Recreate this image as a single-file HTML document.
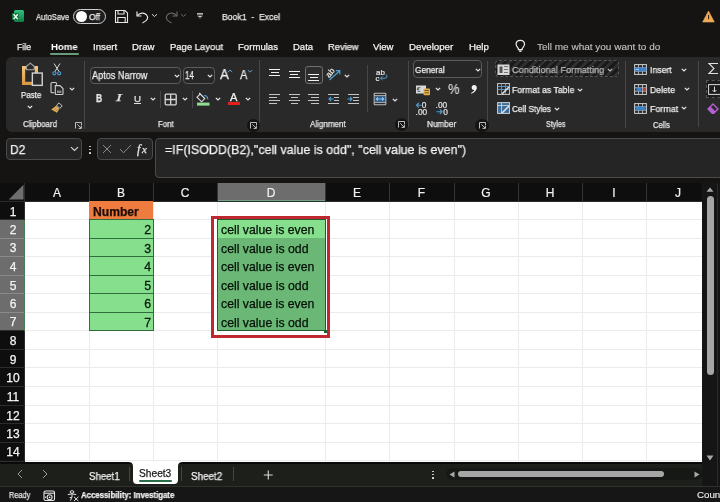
<!DOCTYPE html>
<html><head><meta charset="utf-8"><style>
.t{will-change:transform;}
html,body{margin:0;padding:0;width:720px;height:502px;overflow:hidden;background:#151412;font-family:"Liberation Sans", sans-serif;}
</style></head><body>
<div style="position:relative;width:720px;height:502px;overflow:hidden;">
<div style="position:absolute;left:14px;top:10px;width:10px;height:12px;background:linear-gradient(#33c481,#21a366 45%,#107c41);border-radius:1.5px;"></div>
<div style="position:absolute;left:11.8px;top:12.6px;width:7.4px;height:7.4px;background:#107c41;border-radius:1px;"></div>
<svg style="position:absolute;left:11.8px;top:12.6px;" width="7.4" height="7.4" viewBox="0 0 7.4 7.4"><path d="M1.6 1.3 L5.8 6.1 M5.8 1.3 L1.6 6.1" stroke="#fff" stroke-width="1.3"/></svg>
<div class="t" style="position:absolute;left:35.5px;top:12.80px;font-size:8.8px;line-height:8.8px;font-weight:400;color:#e8e8e8;white-space:pre;-webkit-text-stroke:0.25px #e8e8e8;transform:scaleX(0.8701);transform-origin:0 0;">AutoSave</div>
<div style="position:absolute;left:73px;top:9px;width:33px;height:15px;box-sizing:border-box;border:1.3px solid #cfcfcf;border-radius:8px;background:#1e1e1e;"></div>
<div style="position:absolute;left:75.5px;top:11px;width:11px;height:11px;background:#fff;border-radius:50%;"></div>
<div class="t" style="position:absolute;left:89.4px;top:12.63px;font-size:9px;line-height:9px;font-weight:400;color:#f0f0f0;white-space:pre;-webkit-text-stroke:0.25px #f0f0f0;transform:scaleX(0.9456);transform-origin:0 0;">Off</div>
<svg style="position:absolute;left:114px;top:9px;" width="15" height="15" viewBox="0 0 15 15"><path d="M1.5 1.5 H11 L13.5 4 V13.5 H1.5 Z" fill="none" stroke="#e6e6e6" stroke-width="1.1"/><path d="M4 1.5 V5 H10 V1.5" fill="none" stroke="#e6e6e6" stroke-width="1.1"/><path d="M3.8 13.5 V8.5 H11.2 V13.5" fill="none" stroke="#e6e6e6" stroke-width="1.1"/></svg>
<svg style="position:absolute;left:135px;top:9px;" width="15" height="15" viewBox="0 0 15 15"><path d="M2 2.5 V7 H6.5" fill="none" stroke="#e6e6e6" stroke-width="1.2"/><path d="M2.3 6.8 C4.5 3.8 9 3 11.5 5.8 C14 8.6 12.5 11.5 7.5 14" fill="none" stroke="#e6e6e6" stroke-width="1.2"/></svg>
<svg style="position:absolute;left:151px;top:13px;" width="7" height="5" viewBox="0 0 7 5"><path d="M1 1.2 L3.5 3.5 L6 1.2" fill="none" stroke="#d8d8d8" stroke-width="1"/></svg>
<svg style="position:absolute;left:164px;top:9px;" width="15" height="15" viewBox="0 0 15 15"><path d="M13 2.5 V7 H8.5" fill="none" stroke="#6a6a6a" stroke-width="1.1"/><path d="M12.7 6.8 C10.5 3.8 6 3 3.5 5.8 C1 8.6 2.5 11.5 7.5 14" fill="none" stroke="#6a6a6a" stroke-width="1.1"/></svg>
<svg style="position:absolute;left:180px;top:13px;" width="7" height="5" viewBox="0 0 7 5"><path d="M1 1.2 L3.5 3.5 L6 1.2" fill="none" stroke="#6a6a6a" stroke-width="1"/></svg>
<svg style="position:absolute;left:196px;top:12px;" width="8" height="8" viewBox="0 0 8 8"><rect x="1" y="1.2" width="6" height="1.3" fill="#e0e0e0"/><path d="M1.2 3.8 H6.8 L4 6.8 Z" fill="#e0e0e0"/><path d="M2.3 4.5 L4 6 L5.7 4.5" fill="none" stroke="#151412" stroke-width="0.8"/></svg>
<div class="t" style="position:absolute;left:221.9px;top:12.21px;font-size:9.5px;line-height:9.5px;font-weight:400;color:#ececec;white-space:pre;-webkit-text-stroke:0.25px #ececec;transform:scaleX(0.9094);transform-origin:0 0;">Book1  -  Excel</div>
<svg style="position:absolute;left:702px;top:10px;" width="13" height="13" viewBox="0 0 13 13"><path d="M6.5 1 L12.3 12 H0.7 Z" fill="#f0a957" stroke="#f0a957" stroke-width="0.6" stroke-linejoin="round"/><rect x="6" y="4.8" width="1.1" height="4.4" fill="#3a2a10"/></svg>
<div class="t" style="position:absolute;left:16.7px;top:42.21px;font-size:9.5px;line-height:9.5px;font-weight:400;color:#f2f2f2;white-space:pre;-webkit-text-stroke:0.25px #f2f2f2;transform:scaleX(0.9208);transform-origin:0 0;">File</div>
<div class="t" style="position:absolute;left:92.5px;top:42.21px;font-size:9.5px;line-height:9.5px;font-weight:400;color:#f2f2f2;white-space:pre;-webkit-text-stroke:0.25px #f2f2f2;transform:scaleX(1.0183);transform-origin:0 0;">Insert</div>
<div class="t" style="position:absolute;left:132px;top:42.21px;font-size:9.5px;line-height:9.5px;font-weight:400;color:#f2f2f2;white-space:pre;-webkit-text-stroke:0.25px #f2f2f2;transform:scaleX(1.0148);transform-origin:0 0;">Draw</div>
<div class="t" style="position:absolute;left:169.5px;top:42.21px;font-size:9.5px;line-height:9.5px;font-weight:400;color:#f2f2f2;white-space:pre;-webkit-text-stroke:0.25px #f2f2f2;transform:scaleX(0.9933);transform-origin:0 0;">Page Layout</div>
<div class="t" style="position:absolute;left:238px;top:42.21px;font-size:9.5px;line-height:9.5px;font-weight:400;color:#f2f2f2;white-space:pre;-webkit-text-stroke:0.25px #f2f2f2;transform:scaleX(1.0103);transform-origin:0 0;">Formulas</div>
<div class="t" style="position:absolute;left:293px;top:42.21px;font-size:9.5px;line-height:9.5px;font-weight:400;color:#f2f2f2;white-space:pre;-webkit-text-stroke:0.25px #f2f2f2;">Data</div>
<div class="t" style="position:absolute;left:327.5px;top:42.21px;font-size:9.5px;line-height:9.5px;font-weight:400;color:#f2f2f2;white-space:pre;-webkit-text-stroke:0.25px #f2f2f2;transform:scaleX(0.9789);transform-origin:0 0;">Review</div>
<div class="t" style="position:absolute;left:372.5px;top:42.21px;font-size:9.5px;line-height:9.5px;font-weight:400;color:#f2f2f2;white-space:pre;-webkit-text-stroke:0.25px #f2f2f2;">View</div>
<div class="t" style="position:absolute;left:408.75px;top:42.21px;font-size:9.5px;line-height:9.5px;font-weight:400;color:#f2f2f2;white-space:pre;-webkit-text-stroke:0.25px #f2f2f2;transform:scaleX(1.0216);transform-origin:0 0;">Developer</div>
<div class="t" style="position:absolute;left:468.7px;top:42.21px;font-size:9.5px;line-height:9.5px;font-weight:400;color:#f2f2f2;white-space:pre;-webkit-text-stroke:0.25px #f2f2f2;transform:scaleX(1.0129);transform-origin:0 0;">Help</div>
<div class="t" style="position:absolute;left:50.8px;top:41.95px;font-size:9.8px;line-height:9.8px;font-weight:700;color:#ffffff;white-space:pre;-webkit-text-stroke:0.25px #ffffff;transform:scaleX(0.9804);transform-origin:0 0;-webkit-text-stroke:0;">Home</div>
<div style="position:absolute;left:50px;top:53px;width:28.7px;height:1.6px;background:#679c7a;border-radius:1px;"></div>
<svg style="position:absolute;left:515px;top:39px;" width="11" height="14" viewBox="0 0 11 14"><path d="M5.3 1.3 C2.7 1.3 1.1 3.2 1.1 5.3 C1.1 7.2 2.6 8.2 3.4 9.6 V10.6 H7.2 V9.6 C8 8.2 9.5 7.2 9.5 5.3 C9.5 3.2 7.9 1.3 5.3 1.3 Z" fill="none" stroke="#ececec" stroke-width="1.2"/><path d="M3.8 11.4 Q3.9 13 5.3 13 Q6.7 13 6.8 11.4 Z" fill="#ececec"/></svg>
<div class="t" style="position:absolute;left:536.7px;top:42.21px;font-size:9.5px;line-height:9.5px;font-weight:400;color:#c4c4c4;white-space:pre;-webkit-text-stroke:0.25px #c4c4c4;transform:scaleX(1.0517);transform-origin:0 0;-webkit-text-stroke:0.1px #c4c4c4;">Tell me what you want to do</div>
<div style="position:absolute;left:6px;top:57px;width:730px;height:75px;background:#292929;border-radius:6px;"></div>
<div style="position:absolute;left:84px;top:61px;width:1px;height:68px;background:#474747;"></div>
<div style="position:absolute;left:259px;top:60px;width:1px;height:68px;background:#474747;"></div>
<div style="position:absolute;left:408px;top:61px;width:1px;height:66px;background:#474747;"></div>
<div style="position:absolute;left:487px;top:61px;width:1px;height:66px;background:#474747;"></div>
<div style="position:absolute;left:625px;top:61px;width:1px;height:67px;background:#474747;"></div>
<div style="position:absolute;left:698px;top:61px;width:1px;height:66px;background:#474747;"></div>
<div style="position:absolute;left:160px;top:91px;width:1px;height:17px;background:#474747;"></div>
<div style="position:absolute;left:192px;top:91px;width:1px;height:17px;background:#474747;"></div>
<div style="position:absolute;left:367px;top:65px;width:1px;height:47px;background:#474747;"></div>
<div class="t" style="position:absolute;left:23px;top:120.05px;font-size:8.5px;line-height:8.5px;font-weight:400;color:#e8e8e8;white-space:pre;-webkit-text-stroke:0.25px #e8e8e8;transform:scaleX(0.9343);transform-origin:0 0;">Clipboard</div>
<div class="t" style="position:absolute;left:157.5px;top:120.05px;font-size:8.5px;line-height:8.5px;font-weight:400;color:#e8e8e8;white-space:pre;-webkit-text-stroke:0.25px #e8e8e8;transform:scaleX(0.9109);transform-origin:0 0;">Font</div>
<div class="t" style="position:absolute;left:309.7px;top:120.05px;font-size:8.5px;line-height:8.5px;font-weight:400;color:#e8e8e8;white-space:pre;-webkit-text-stroke:0.25px #e8e8e8;transform:scaleX(0.9415);transform-origin:0 0;">Alignment</div>
<div class="t" style="position:absolute;left:426.5px;top:120.05px;font-size:8.5px;line-height:8.5px;font-weight:400;color:#e8e8e8;white-space:pre;-webkit-text-stroke:0.25px #e8e8e8;transform:scaleX(0.9625);transform-origin:0 0;">Number</div>
<div class="t" style="position:absolute;left:546.3px;top:120.05px;font-size:8.5px;line-height:8.5px;font-weight:400;color:#e8e8e8;white-space:pre;-webkit-text-stroke:0.25px #e8e8e8;transform:scaleX(0.8378);transform-origin:0 0;">Styles</div>
<div class="t" style="position:absolute;left:653.2px;top:121.05px;font-size:8.5px;line-height:8.5px;font-weight:400;color:#e8e8e8;white-space:pre;-webkit-text-stroke:0.25px #e8e8e8;transform:scaleX(0.8886);transform-origin:0 0;">Cells</div>
<svg style="position:absolute;left:74.5px;top:121.5px;" width="7" height="7" viewBox="0 0 7 7"><path d="M0.5 6.5 V0.5 H6.5 V3" fill="none" stroke="#cfcfcf" stroke-width="0.9"/><path d="M2.3 2.3 L6.2 6.2 M6.4 3.5 V6.4 H3.5" fill="none" stroke="#cfcfcf" stroke-width="0.9"/></svg>
<div style="position:absolute;left:246.5px;top:118.6px;width:13.5px;height:13.5px;border-radius:50%;background:#141414;"></div>
<svg style="position:absolute;left:250px;top:121.8px;" width="7" height="7" viewBox="0 0 7 7"><path d="M0.5 6.5 V0.5 H6.5 V3" fill="none" stroke="#cfcfcf" stroke-width="0.9"/><path d="M2.3 2.3 L6.2 6.2 M6.4 3.5 V6.4 H3.5" fill="none" stroke="#cfcfcf" stroke-width="0.9"/></svg>
<div style="position:absolute;left:394.7px;top:117.8px;width:13.5px;height:13.5px;border-radius:50%;background:#141414;"></div>
<svg style="position:absolute;left:398.2px;top:121px;" width="7" height="7" viewBox="0 0 7 7"><path d="M0.5 6.5 V0.5 H6.5 V3" fill="none" stroke="#cfcfcf" stroke-width="0.9"/><path d="M2.3 2.3 L6.2 6.2 M6.4 3.5 V6.4 H3.5" fill="none" stroke="#cfcfcf" stroke-width="0.9"/></svg>
<div style="position:absolute;left:475.1px;top:118.8px;width:13.5px;height:13.5px;border-radius:50%;background:#141414;"></div>
<svg style="position:absolute;left:478.6px;top:122px;" width="7" height="7" viewBox="0 0 7 7"><path d="M0.5 6.5 V0.5 H6.5 V3" fill="none" stroke="#cfcfcf" stroke-width="0.9"/><path d="M2.3 2.3 L6.2 6.2 M6.4 3.5 V6.4 H3.5" fill="none" stroke="#cfcfcf" stroke-width="0.9"/></svg>
<svg style="position:absolute;left:20px;top:60px;" width="26" height="28" viewBox="0 0 26 28"><defs><linearGradient id="pg" x1="0" y1="0" x2="0" y2="1"><stop offset="0" stop-color="#f2c274"/><stop offset="1" stop-color="#dc9a45"/></linearGradient></defs><rect x="3.6" y="7.6" width="12.8" height="15.8" fill="none" stroke="url(#pg)" stroke-width="3.2"/><path d="M6.6 9.8 L6.2 6.6 L10.3 3.2 L14.4 6.6 L14 9.8 Z" fill="#2a2a2a" stroke="#a8a8a8" stroke-width="1.1"/><rect x="12.35" y="13.05" width="9.9" height="12.3" fill="#2a2a2a" stroke="#d0d0d0" stroke-width="1.4"/></svg>
<div class="t" style="position:absolute;left:20.6px;top:90.63px;font-size:9px;line-height:9px;font-weight:400;color:#f0f0f0;white-space:pre;-webkit-text-stroke:0.25px #f0f0f0;transform:scaleX(0.8820);transform-origin:0 0;">Paste</div>
<svg style="position:absolute;left:27.3px;top:104.8px;" width="6" height="4" viewBox="0 0 6 4"><path d="M0.8 0.9 L3.0 3.0 L5.2 0.9" fill="none" stroke="#e4e4e4" stroke-width="1.25"/></svg>
<svg style="position:absolute;left:51px;top:62px;" width="12" height="14" viewBox="0 0 12 14"><path d="M3 1.5 L8.2 9.8 M9 1.5 L3.8 9.8" stroke="#d8d8d8" stroke-width="1"/><circle cx="3.4" cy="11.3" r="1.6" fill="none" stroke="#4f9fd8" stroke-width="1.1"/><circle cx="8.2" cy="11.3" r="1.6" fill="none" stroke="#4f9fd8" stroke-width="1.1"/></svg>
<svg style="position:absolute;left:49px;top:81px;" width="16" height="15" viewBox="0 0 16 15"><path d="M5.5 11.8 H3.2 Q2 11.8 2 10.6 V2.6 Q2 1.5 3.2 1.5 H6.5 Q7.5 1.5 7.5 2.6 V3.8" fill="none" stroke="#d0d0d0" stroke-width="1.1"/><path d="M6.3 4.6 H11 L14 7.6 V12.7 Q14 13.5 13.2 13.5 H7.1 Q6.3 13.5 6.3 12.7 Z" fill="none" stroke="#d0d0d0" stroke-width="1.1"/><rect x="8" y="9.6" width="4.3" height="2.4" fill="#8a8a8a"/></svg>
<svg style="position:absolute;left:68.5px;top:87.3px;" width="6" height="4" viewBox="0 0 6 4"><path d="M0.8 0.9 L3.0 3.0 L5.2 0.9" fill="none" stroke="#e4e4e4" stroke-width="1.25"/></svg>
<svg style="position:absolute;left:50px;top:101px;" width="14" height="13" viewBox="0 0 14 13"><path d="M9 1.8 L12.2 5 L9.8 7.4 L6.6 4.2 Z" fill="none" stroke="#c8c8c8" stroke-width="1"/><path d="M6.2 4.8 L9.3 7.9 L6.8 11.8 L1.3 8.6 Z" fill="#e9b35a"/><path d="M3 9.8 L5.8 6.8 M5 10.9 L7.5 8" stroke="#8a6a30" stroke-width="0.7"/></svg>
<div style="position:absolute;left:90px;top:66.5px;width:91px;height:17px;box-sizing:border-box;border:1px solid #5c5c5c;border-radius:4px;background:#262626;"></div>
<div class="t" style="position:absolute;left:91.5px;top:70.78px;font-size:10px;line-height:10px;font-weight:400;color:#f0f0f0;white-space:pre;-webkit-text-stroke:0.25px #f0f0f0;transform:scaleX(0.9145);transform-origin:0 0;">Aptos Narrow</div>
<svg style="position:absolute;left:173.5px;top:74.0px;" width="6" height="4" viewBox="0 0 6 4"><path d="M0.8 0.9 L3.0 3.0 L5.2 0.9" fill="none" stroke="#e4e4e4" stroke-width="1.25"/></svg>
<div style="position:absolute;left:182.5px;top:66.5px;width:32.5px;height:17px;box-sizing:border-box;border:1px solid #5c5c5c;border-radius:4px;background:#262626;"></div>
<div class="t" style="position:absolute;left:184.7px;top:70.78px;font-size:10px;line-height:10px;font-weight:400;color:#f0f0f0;white-space:pre;-webkit-text-stroke:0.25px #f0f0f0;transform:scaleX(0.8090);transform-origin:0 0;">14</div>
<svg style="position:absolute;left:207.3px;top:74.0px;" width="6" height="4" viewBox="0 0 6 4"><path d="M0.8 0.9 L3.0 3.0 L5.2 0.9" fill="none" stroke="#e4e4e4" stroke-width="1.25"/></svg>
<div class="t" style="position:absolute;left:219.6px;top:66.72px;font-size:14.8px;line-height:14.8px;font-weight:400;color:#f0f0f0;white-space:pre;-webkit-text-stroke:0.25px #f0f0f0;transform:scaleX(0.9013);transform-origin:0 0;">A</div>
<svg style="position:absolute;left:226.5px;top:68.5px;" width="6" height="4" viewBox="0 0 6 4"><path d="M0.8 3.2 L3 1 L5.2 3.2" fill="none" stroke="#5fa3d6" stroke-width="1"/></svg>
<div class="t" style="position:absolute;left:240px;top:68.84px;font-size:12.3px;line-height:12.3px;font-weight:400;color:#f0f0f0;white-space:pre;-webkit-text-stroke:0.25px #f0f0f0;transform:scaleX(0.9021);transform-origin:0 0;">A</div>
<svg style="position:absolute;left:246.5px;top:68.8px;" width="6" height="4" viewBox="0 0 6 4"><path d="M0.8 1 L3 3.2 L5.2 1" fill="none" stroke="#5fa3d6" stroke-width="1"/></svg>
<div class="t" style="position:absolute;left:96px;top:93.78px;font-size:10px;line-height:10px;font-weight:700;color:#e8e8e8;white-space:pre;-webkit-text-stroke:0.25px #e8e8e8;transform:scaleX(0.8570);transform-origin:0 0;">B</div>
<div class="t" style="position:absolute;left:115.8px;top:93.36px;font-size:10.5px;line-height:10.5px;font-weight:400;color:#e0e0e0;white-space:pre;-webkit-text-stroke:0.25px #e0e0e0;transform:scaleX(1.6428);transform-origin:0 0;font-family:'Liberation Serif';font-style:italic;">I</div>
<div class="t" style="position:absolute;left:133.8px;top:94.21px;font-size:9.5px;line-height:9.5px;font-weight:400;color:#e0e0e0;white-space:pre;-webkit-text-stroke:0.25px #e0e0e0;transform:scaleX(1.0182);transform-origin:0 0;">U</div>
<div style="position:absolute;left:134px;top:103px;width:7px;height:1px;background:#e0e0e0;"></div>
<svg style="position:absolute;left:149.5px;top:97.1px;" width="6" height="4" viewBox="0 0 6 4"><path d="M0.8 0.9 L3.0 3.0 L5.2 0.9" fill="none" stroke="#e4e4e4" stroke-width="1.25"/></svg>
<svg style="position:absolute;left:163.5px;top:92.5px;" width="13.5" height="13" viewBox="0 0 13.5 13"><rect x="1.2" y="1.2" width="11" height="10.6" rx="1" fill="none" stroke="#d8d8d8" stroke-width="1.3"/><path d="M6.7 1.2 V11.8 M1.2 6.5 H12.2" stroke="#d8d8d8" stroke-width="1.3"/></svg>
<svg style="position:absolute;left:181.7px;top:97.3px;" width="6" height="4" viewBox="0 0 6 4"><path d="M0.8 0.9 L3.0 3.0 L5.2 0.9" fill="none" stroke="#e4e4e4" stroke-width="1.25"/></svg>
<svg style="position:absolute;left:196px;top:91.5px;" width="14" height="14" viewBox="0 0 14 14"><path d="M4.2 2 L8.8 6.6 L5.6 9.8 L1 5.2 Z" fill="none" stroke="#e0e0e0" stroke-width="1.1"/><path d="M4.2 2 L3.2 1" stroke="#e0e0e0" stroke-width="1.1"/><path d="M8 3.5 Q11.5 3.5 11.8 7.2" fill="none" stroke="#5a9fd6" stroke-width="1.2"/><rect x="1" y="10.6" width="12.5" height="3" fill="#8fde8f"/></svg>
<svg style="position:absolute;left:214.5px;top:97.3px;" width="6" height="4" viewBox="0 0 6 4"><path d="M0.8 0.9 L3.0 3.0 L5.2 0.9" fill="none" stroke="#e4e4e4" stroke-width="1.25"/></svg>
<div class="t" style="position:absolute;left:230px;top:92.62px;font-size:10.2px;line-height:10.2px;font-weight:400;color:#f0f0f0;white-space:pre;-webkit-text-stroke:0.25px #f0f0f0;transform:scaleX(1.0887);transform-origin:0 0;">A</div>
<div style="position:absolute;left:227.5px;top:102px;width:12.5px;height:3.2px;background:#e3201b;"></div>
<svg style="position:absolute;left:245.0px;top:97.3px;" width="6" height="4" viewBox="0 0 6 4"><path d="M0.8 0.9 L3.0 3.0 L5.2 0.9" fill="none" stroke="#e4e4e4" stroke-width="1.25"/></svg>
<div style="position:absolute;left:269px;top:68.64999999999999px;width:11.3px;height:1.3px;background:#f0f0f0;"></div>
<div style="position:absolute;left:270.9px;top:71.85px;width:8px;height:1.3px;background:#f0f0f0;"></div>
<div style="position:absolute;left:269px;top:74.94999999999999px;width:11.3px;height:1.3px;background:#f0f0f0;"></div>
<div style="position:absolute;left:288.7px;top:70.75px;width:11.2px;height:1.3px;background:#f0f0f0;"></div>
<div style="position:absolute;left:290.3px;top:73.85px;width:8px;height:1.3px;background:#f0f0f0;"></div>
<div style="position:absolute;left:288.7px;top:76.94999999999999px;width:11.2px;height:1.3px;background:#f0f0f0;"></div>
<div style="position:absolute;left:305px;top:66.2px;width:18px;height:17.8px;box-sizing:border-box;border:1.2px solid #707070;border-radius:3px;background:#2d2d2d;"></div>
<div style="position:absolute;left:308.4px;top:73.75px;width:11px;height:1.3px;background:#f0f0f0;"></div>
<div style="position:absolute;left:310.09999999999997px;top:76.75px;width:7.6px;height:1.3px;background:#f0f0f0;"></div>
<div style="position:absolute;left:308.4px;top:79.85px;width:11px;height:1.3px;background:#f0f0f0;"></div>
<div style="position:absolute;left:269px;top:93.55px;width:11.3px;height:1.3px;background:#c4c4c4;"></div>
<div style="position:absolute;left:269px;top:96.64999999999999px;width:8px;height:1.3px;background:#c4c4c4;"></div>
<div style="position:absolute;left:269px;top:99.64999999999999px;width:11.3px;height:1.3px;background:#c4c4c4;"></div>
<div style="position:absolute;left:269px;top:102.75px;width:8px;height:1.3px;background:#c4c4c4;"></div>
<div style="position:absolute;left:289px;top:93.55px;width:11px;height:1.3px;background:#c4c4c4;"></div>
<div style="position:absolute;left:290.7px;top:96.64999999999999px;width:7.6px;height:1.3px;background:#c4c4c4;"></div>
<div style="position:absolute;left:289px;top:99.64999999999999px;width:11px;height:1.3px;background:#c4c4c4;"></div>
<div style="position:absolute;left:290.7px;top:102.75px;width:7.6px;height:1.3px;background:#c4c4c4;"></div>
<div style="position:absolute;left:308.4px;top:93.55px;width:11px;height:1.3px;background:#c4c4c4;"></div>
<div style="position:absolute;left:311.4px;top:96.64999999999999px;width:8px;height:1.3px;background:#c4c4c4;"></div>
<div style="position:absolute;left:308.4px;top:99.64999999999999px;width:11px;height:1.3px;background:#c4c4c4;"></div>
<div style="position:absolute;left:311.4px;top:102.75px;width:8px;height:1.3px;background:#c4c4c4;"></div>
<div style="position:absolute;left:328px;top:93.55px;width:11.2px;height:1.3px;background:#c4c4c4;"></div>
<div style="position:absolute;left:328px;top:102.75px;width:11.2px;height:1.3px;background:#c4c4c4;"></div>
<div style="position:absolute;left:333.5px;top:96.64999999999999px;width:5.7px;height:1.3px;background:#c4c4c4;"></div>
<div style="position:absolute;left:333.5px;top:99.64999999999999px;width:5.7px;height:1.3px;background:#c4c4c4;"></div>
<svg style="position:absolute;left:327.5px;top:95.5px;" width="6" height="6" viewBox="0 0 6 6"><path d="M5.5 3 H1 M3 1 L1 3 L3 5" fill="none" stroke="#4f9fd8" stroke-width="1.1"/></svg>
<div style="position:absolute;left:347.5px;top:93.55px;width:11px;height:1.3px;background:#c4c4c4;"></div>
<div style="position:absolute;left:347.5px;top:102.75px;width:11px;height:1.3px;background:#c4c4c4;"></div>
<div style="position:absolute;left:353px;top:96.64999999999999px;width:5.5px;height:1.3px;background:#c4c4c4;"></div>
<div style="position:absolute;left:353px;top:99.64999999999999px;width:5.5px;height:1.3px;background:#c4c4c4;"></div>
<svg style="position:absolute;left:347.3px;top:95.5px;" width="6" height="6" viewBox="0 0 6 6"><path d="M0.5 3 H5 M3 1 L5 3 L3 5" fill="none" stroke="#4f9fd8" stroke-width="1.1"/></svg>
<svg style="position:absolute;left:325px;top:67px;" width="17" height="15" viewBox="0 0 17 15"><text x="0" y="0" transform="translate(4.2 11.2) rotate(-50)" font-family="Liberation Sans" font-size="8.5" fill="#ececec" stroke="#ececec" stroke-width="0.2">ab</text><path d="M4.5 13 L14.5 4 M10.8 3.6 H14.8 V7.6" fill="none" stroke="#4f9fd8" stroke-width="1.2"/></svg>
<svg style="position:absolute;left:343.5px;top:73.9px;" width="6" height="4" viewBox="0 0 6 4"><path d="M0.8 0.9 L3.0 3.0 L5.2 0.9" fill="none" stroke="#e4e4e4" stroke-width="1.25"/></svg>
<svg style="position:absolute;left:375px;top:68px;" width="13" height="14" viewBox="0 0 13 14"><text x="1" y="6.8" font-family="Liberation Sans" font-size="8" fill="#e8e8e8" stroke="#e8e8e8" stroke-width="0.2">ab</text><text x="0.6" y="12.8" font-family="Liberation Sans" font-size="8" fill="#e8e8e8" stroke="#e8e8e8" stroke-width="0.2">c</text><path d="M6 10.2 H10 Q12 10.2 12 8.3 Q12 6.8 10.5 6.8 M7.5 8.5 L5.5 10.2 L7.5 12" fill="none" stroke="#4f9fd8" stroke-width="1"/></svg>
<svg style="position:absolute;left:373px;top:92px;" width="14" height="14" viewBox="0 0 14 14"><rect x="1.2" y="1.2" width="11.6" height="11.6" rx="0.8" fill="#2c2c2c" stroke="#bdbdbd" stroke-width="1.1"/><rect x="1.8" y="3.8" width="10.4" height="6.4" fill="#2e5a86"/><path d="M1.2 3.6 H12.8 M1.2 10.4 H12.8" stroke="#bdbdbd" stroke-width="0.9"/><path d="M3.3 7 H10.7 M4.9 5.4 L3.3 7 L4.9 8.6 M9.1 5.4 L10.7 7 L9.1 8.6" fill="none" stroke="#8cc8f4" stroke-width="1.1"/></svg>
<svg style="position:absolute;left:391.8px;top:97.8px;" width="6" height="4" viewBox="0 0 6 4"><path d="M0.8 0.9 L3.0 3.0 L5.2 0.9" fill="none" stroke="#e4e4e4" stroke-width="1.25"/></svg>
<div style="position:absolute;left:413.3px;top:60.2px;width:68.5px;height:17.4px;box-sizing:border-box;border:1px solid #5c5c5c;border-radius:4px;background:#262626;"></div>
<div class="t" style="position:absolute;left:414.9px;top:65.21px;font-size:9.5px;line-height:9.5px;font-weight:400;color:#f0f0f0;white-space:pre;-webkit-text-stroke:0.25px #f0f0f0;transform:scaleX(0.8754);transform-origin:0 0;">General</div>
<svg style="position:absolute;left:474.5px;top:68.0px;" width="6" height="4" viewBox="0 0 6 4"><path d="M0.8 0.9 L3.0 3.0 L5.2 0.9" fill="none" stroke="#e4e4e4" stroke-width="1.25"/></svg>
<svg style="position:absolute;left:415px;top:83.5px;" width="16" height="12" viewBox="0 0 16 12"><rect x="1" y="1.5" width="10" height="8" fill="#d8d8d8"/><text x="1.8" y="8" font-family="Liberation Sans" font-size="6.5" fill="#333">€</text><rect x="8.5" y="4.5" width="6.5" height="6.8" rx="1" fill="#e5b04e"/><path d="M9.5 6.5 H14 M9.5 8.8 H14" stroke="#5a4010" stroke-width="0.8"/></svg>
<svg style="position:absolute;left:434.5px;top:87.3px;" width="6" height="4" viewBox="0 0 6 4"><path d="M0.8 0.9 L3.0 3.0 L5.2 0.9" fill="none" stroke="#e4e4e4" stroke-width="1.25"/></svg>
<div class="t" style="position:absolute;left:447.5px;top:82.40px;font-size:14px;line-height:14px;font-weight:400;color:#f0f0f0;white-space:pre;-webkit-text-stroke:0.25px #f0f0f0;transform:scaleX(0.9315);transform-origin:0 0;-webkit-text-stroke:0;">%</div>
<svg style="position:absolute;left:469px;top:84px;" width="9" height="11" viewBox="0 0 9 11"><circle cx="5.2" cy="3.6" r="2.5" fill="#f0f0f0"/><path d="M7.6 3.8 Q7.6 8 2.2 9.8 L2 8.9 Q5.6 7.2 5.4 5 Z" fill="#f0f0f0"/></svg>
<svg style="position:absolute;left:415px;top:101px;" width="16" height="15" viewBox="0 0 16 15"><text x="6.8" y="7.2" font-family="Liberation Sans" font-size="8.3" fill="#e4e4e4" stroke="#e4e4e4" stroke-width="0.2">0</text><text x="0.6" y="13.6" font-family="Liberation Sans" font-size="8.3" fill="#e4e4e4" stroke="#e4e4e4" stroke-width="0.2">.00</text><path d="M6.6 4.3 H1.6 M3.8 2 L1.5 4.3 L3.8 6.6" fill="none" stroke="#4f9fd8" stroke-width="1.1"/></svg>
<svg style="position:absolute;left:434.5px;top:101px;" width="16" height="15" viewBox="0 0 16 15"><text x="0.6" y="7.2" font-family="Liberation Sans" font-size="8.3" fill="#e4e4e4" stroke="#e4e4e4" stroke-width="0.2">.00</text><text x="8.2" y="13.6" font-family="Liberation Sans" font-size="8.3" fill="#e4e4e4" stroke="#e4e4e4" stroke-width="0.2">0</text><path d="M1.5 10.7 H7 M4.8 8.4 L7.1 10.7 L4.8 13" fill="none" stroke="#4f9fd8" stroke-width="1.1"/></svg>
<div style="position:absolute;left:494.7px;top:60.4px;width:124.5px;height:17px;box-sizing:border-box;border:1px dashed #555;border-radius:4px;background:repeating-linear-gradient(135deg,#1a1a1a 0 3px,#2e2e2e 3px 6px);"></div>
<svg style="position:absolute;left:496.5px;top:63.5px;" width="13" height="11.5" viewBox="0 0 13 11.5"><rect x="0.5" y="0.5" width="12" height="10.5" fill="#d8d8d8"/><rect x="2.5" y="2.5" width="3" height="6.5" fill="#555"/><path d="M7 2.5 H11 M7 5.5 H11 M7 8.5 H11" stroke="#777" stroke-width="1"/></svg>
<div class="t" style="position:absolute;left:511.8px;top:65.21px;font-size:9.5px;line-height:9.5px;font-weight:400;color:#b8b8b8;white-space:pre;-webkit-text-stroke:0.25px #b8b8b8;transform:scaleX(0.9647);transform-origin:0 0;">Conditional Formatting</div>
<svg style="position:absolute;left:606.5px;top:68.0px;" width="6" height="4" viewBox="0 0 6 4"><path d="M0.8 0.9 L3.0 3.0 L5.2 0.9" fill="none" stroke="#b8b8b8" stroke-width="1.25"/></svg>
<svg style="position:absolute;left:496.5px;top:82.5px;" width="13.5" height="12" viewBox="0 0 13.5 12"><rect x="0.6" y="0.6" width="12" height="10.8" fill="none" stroke="#d0d0d0" stroke-width="1"/><path d="M0.6 3.5 H12.6 M0.6 6.5 H12.6 M4.5 0.6 V11.4 M8.5 0.6 V11.4" stroke="#5a9fd6" stroke-width="0.9"/><path d="M5 11 L12 4" stroke="#e0e0e0" stroke-width="1.6"/></svg>
<div class="t" style="position:absolute;left:511.8px;top:85.21px;font-size:9.5px;line-height:9.5px;font-weight:400;color:#f0f0f0;white-space:pre;-webkit-text-stroke:0.25px #f0f0f0;transform:scaleX(0.9168);transform-origin:0 0;">Format as Table</div>
<svg style="position:absolute;left:576.9px;top:87.5px;" width="6" height="4" viewBox="0 0 6 4"><path d="M0.8 0.9 L3.0 3.0 L5.2 0.9" fill="none" stroke="#e4e4e4" stroke-width="1.25"/></svg>
<svg style="position:absolute;left:496.5px;top:102px;" width="13.5" height="12" viewBox="0 0 13.5 12"><rect x="0.6" y="0.6" width="12" height="10.8" fill="#3b6e9c" stroke="#d0d0d0" stroke-width="1"/><path d="M0.6 3.5 H12.6 M4.5 0.6 V11.4" stroke="#d0d0d0" stroke-width="0.9"/><path d="M5 11 L12 4" stroke="#e0e0e0" stroke-width="1.6"/></svg>
<div class="t" style="position:absolute;left:511.8px;top:104.21px;font-size:9.5px;line-height:9.5px;font-weight:400;color:#f0f0f0;white-space:pre;-webkit-text-stroke:0.25px #f0f0f0;transform:scaleX(0.8691);transform-origin:0 0;">Cell Styles</div>
<svg style="position:absolute;left:554.1px;top:106.8px;" width="6" height="4" viewBox="0 0 6 4"><path d="M0.8 0.9 L3.0 3.0 L5.2 0.9" fill="none" stroke="#e4e4e4" stroke-width="1.25"/></svg>
<svg style="position:absolute;left:633.8px;top:64px;" width="13" height="11" viewBox="0 0 13 11"><rect x="0.6" y="0.6" width="11.8" height="9.8" fill="none" stroke="#d0d0d0" stroke-width="1"/><path d="M0.6 3.8 H12.4 M0.6 7.2 H12.4 M4.5 0.6 V10.4 M8.5 0.6 V10.4" stroke="#d0d0d0" stroke-width="0.8"/><rect x="0.6" y="3.5" width="11.8" height="3.8" fill="#3c82c8"/><path d="M5 5.4 H1.5" stroke="#9fd0ff" stroke-width="1"/></svg>
<svg style="position:absolute;left:633.8px;top:83.5px;" width="13" height="11" viewBox="0 0 13 11"><rect x="0.6" y="0.6" width="11.8" height="9.8" fill="none" stroke="#d0d0d0" stroke-width="1"/><path d="M0.6 3.8 H12.4 M0.6 7.2 H12.4 M4.5 0.6 V10.4 M8.5 0.6 V10.4" stroke="#d0d0d0" stroke-width="0.8"/><rect x="2.5" y="3.5" width="5" height="3.8" fill="#3c82c8"/><path d="M8.8 3.8 L12 7 M12 3.8 L8.8 7" stroke="#e04040" stroke-width="1.1"/></svg>
<svg style="position:absolute;left:633.8px;top:102.8px;" width="13" height="11" viewBox="0 0 13 11"><rect x="0.6" y="0.6" width="11.8" height="9.8" fill="none" stroke="#d0d0d0" stroke-width="1"/><path d="M0.6 3.8 H12.4 M0.6 7.2 H12.4 M4.5 0.6 V10.4 M8.5 0.6 V10.4" stroke="#d0d0d0" stroke-width="0.8"/><rect x="1.5" y="3.5" width="10" height="3.8" fill="#3c82c8"/></svg>
<div class="t" style="position:absolute;left:649.7px;top:65.21px;font-size:9.5px;line-height:9.5px;font-weight:400;color:#f0f0f0;white-space:pre;-webkit-text-stroke:0.25px #f0f0f0;transform:scaleX(0.9173);transform-origin:0 0;">Insert</div>
<svg style="position:absolute;left:680.5px;top:67.8px;" width="6" height="4" viewBox="0 0 6 4"><path d="M0.8 0.9 L3.0 3.0 L5.2 0.9" fill="none" stroke="#e4e4e4" stroke-width="1.25"/></svg>
<div class="t" style="position:absolute;left:649.7px;top:85.21px;font-size:9.5px;line-height:9.5px;font-weight:400;color:#f0f0f0;white-space:pre;-webkit-text-stroke:0.25px #f0f0f0;transform:scaleX(0.9101);transform-origin:0 0;">Delete</div>
<svg style="position:absolute;left:683.8px;top:87.3px;" width="6" height="4" viewBox="0 0 6 4"><path d="M0.8 0.9 L3.0 3.0 L5.2 0.9" fill="none" stroke="#e4e4e4" stroke-width="1.25"/></svg>
<div class="t" style="position:absolute;left:649.7px;top:104.21px;font-size:9.5px;line-height:9.5px;font-weight:400;color:#f0f0f0;white-space:pre;-webkit-text-stroke:0.25px #f0f0f0;transform:scaleX(0.9371);transform-origin:0 0;">Format</div>
<svg style="position:absolute;left:680.5px;top:106.3px;" width="6" height="4" viewBox="0 0 6 4"><path d="M0.8 0.9 L3.0 3.0 L5.2 0.9" fill="none" stroke="#e4e4e4" stroke-width="1.25"/></svg>
<svg style="position:absolute;left:707px;top:62px;" width="13" height="13" viewBox="0 0 13 13"><path d="M11 1.5 H2 L7 6.5 L2 11.5 H11" fill="none" stroke="#e0e0e0" stroke-width="1.1"/></svg>
<div style="position:absolute;left:705.5px;top:79.5px;width:20px;height:18px;box-sizing:border-box;border:1px dashed #555;background:#1c1c1c;"></div>
<svg style="position:absolute;left:708px;top:83.5px;" width="13" height="11" viewBox="0 0 13 11"><rect x="0.6" y="0.6" width="12" height="9.8" fill="none" stroke="#d8d8d8" stroke-width="1"/><path d="M6.5 2.5 V8 M4.5 6 L6.5 8 L8.5 6" fill="none" stroke="#d8d8d8" stroke-width="1"/></svg>
<svg style="position:absolute;left:707px;top:102px;" width="13" height="12" viewBox="0 0 13 12"><path d="M1 7 L6 2 L11 7 L6 12 Z" fill="none" stroke="#b55fd0" stroke-width="1.4"/><path d="M3.5 4.5 L8.5 9.5 L6 12 L1 7 Z" fill="#b55fd0"/></svg>
<div style="position:absolute;left:6px;top:138px;width:76px;height:22px;box-sizing:border-box;border:1px solid #4a4a4a;border-radius:4px;background:#252525;"></div>
<div class="t" style="position:absolute;left:10px;top:143.25px;font-size:13px;line-height:13px;font-weight:400;color:#f4f4f4;white-space:pre;-webkit-text-stroke:0.25px #f4f4f4;transform:scaleX(0.9203);transform-origin:0 0;">D2</div>
<svg style="position:absolute;left:70px;top:146px;" width="9" height="6" viewBox="0 0 9 6"><path d="M1 1.2 L4.5 4.5 L8 1.2" fill="none" stroke="#d8d8d8" stroke-width="1.1"/></svg>
<div style="position:absolute;left:89.2px;top:145.6px;width:1.7px;height:1.7px;background:#d8d8d8;border-radius:0.5px;"></div>
<div style="position:absolute;left:89.2px;top:148.8px;width:1.7px;height:1.7px;background:#d8d8d8;border-radius:0.5px;"></div>
<div style="position:absolute;left:89.2px;top:152px;width:1.7px;height:1.7px;background:#d8d8d8;border-radius:0.5px;"></div>
<div style="position:absolute;left:97px;top:138px;width:56px;height:22px;box-sizing:border-box;border:1px solid #4a4a4a;border-radius:4px;background:#252525;"></div>
<svg style="position:absolute;left:101.5px;top:143.5px;" width="10" height="10" viewBox="0 0 10 10"><path d="M1 1 L9 9 M9 1 L1 9" stroke="#8a8a8a" stroke-width="1"/></svg>
<svg style="position:absolute;left:118.5px;top:143.5px;" width="13" height="10" viewBox="0 0 13 10"><path d="M1 5 L4.5 8.8 L12 1" fill="none" stroke="#8a8a8a" stroke-width="1"/></svg>
<div class="t" style="position:absolute;left:137.2px;top:142.67px;font-size:12.5px;line-height:12.5px;font-weight:400;color:#e8e8e8;white-space:pre;-webkit-text-stroke:0.25px #e8e8e8;font-family:'Liberation Serif';font-style:italic;">f</div>
<div class="t" style="position:absolute;left:142px;top:143.94px;font-size:11px;line-height:11px;font-weight:400;color:#e8e8e8;white-space:pre;-webkit-text-stroke:0.25px #e8e8e8;font-family:'Liberation Serif';font-style:italic;">x</div>
<div style="position:absolute;left:155px;top:138px;width:580px;height:40px;box-sizing:border-box;border:1px solid #4a4a4a;border-radius:4px;background:#252525;"></div>
<div class="t" style="position:absolute;left:164.5px;top:143.25px;font-size:13px;line-height:13px;font-weight:400;color:#f4f4f4;white-space:pre;-webkit-text-stroke:0.25px #f4f4f4;transform:scaleX(0.9576);transform-origin:0 0;">=IF(ISODD(B2),"cell value is odd", "cell value is even")</div>
<div style="position:absolute;left:0px;top:183px;width:702px;height:18px;background:#0e0e0e;"></div>
<div style="position:absolute;left:0px;top:201px;width:702px;height:1px;background:#2c2c2c;"></div>
<svg style="position:absolute;left:8px;top:184px;" width="16" height="16" viewBox="0 0 16 16"><path d="M15.5 0.7 V15.5 H0.8 Z" fill="#6e6e6e"/></svg>
<div style="position:absolute;left:217px;top:183px;width:108px;height:18px;background:#6d6d6d;"></div>
<div style="position:absolute;left:217px;top:200px;width:108px;height:1.2px;background:#6fa583;"></div>
<div style="position:absolute;left:89px;top:183px;width:1px;height:18px;background:#363636;"></div>
<div style="position:absolute;left:153px;top:183px;width:1px;height:18px;background:#363636;"></div>
<div style="position:absolute;left:217px;top:183px;width:1px;height:18px;background:#363636;"></div>
<div style="position:absolute;left:325px;top:183px;width:1px;height:18px;background:#363636;"></div>
<div style="position:absolute;left:389px;top:183px;width:1px;height:18px;background:#363636;"></div>
<div style="position:absolute;left:454px;top:183px;width:1px;height:18px;background:#363636;"></div>
<div style="position:absolute;left:518px;top:183px;width:1px;height:18px;background:#363636;"></div>
<div style="position:absolute;left:582px;top:183px;width:1px;height:18px;background:#363636;"></div>
<div style="position:absolute;left:646px;top:183px;width:1px;height:18px;background:#363636;"></div>
<div style="position:absolute;left:24px;top:183px;width:1px;height:278px;background:#2c2c2c;"></div>
<div class="t" style="position:absolute;left:25px;width:64px;top:187.09px;font-size:12px;line-height:12px;color:#f0f0f0;text-align:center;-webkit-text-stroke:0.2px #f0f0f0;">A</div>
<div class="t" style="position:absolute;left:89px;width:64px;top:187.09px;font-size:12px;line-height:12px;color:#f0f0f0;text-align:center;-webkit-text-stroke:0.2px #f0f0f0;">B</div>
<div class="t" style="position:absolute;left:153px;width:64px;top:187.09px;font-size:12px;line-height:12px;color:#f0f0f0;text-align:center;-webkit-text-stroke:0.2px #f0f0f0;">C</div>
<div class="t" style="position:absolute;left:217px;width:108px;top:187.09px;font-size:12px;line-height:12px;color:#f0f0f0;text-align:center;-webkit-text-stroke:0.2px #f0f0f0;">D</div>
<div class="t" style="position:absolute;left:325px;width:64px;top:187.09px;font-size:12px;line-height:12px;color:#f0f0f0;text-align:center;-webkit-text-stroke:0.2px #f0f0f0;">E</div>
<div class="t" style="position:absolute;left:389px;width:65px;top:187.09px;font-size:12px;line-height:12px;color:#f0f0f0;text-align:center;-webkit-text-stroke:0.2px #f0f0f0;">F</div>
<div class="t" style="position:absolute;left:454px;width:64px;top:187.09px;font-size:12px;line-height:12px;color:#f0f0f0;text-align:center;-webkit-text-stroke:0.2px #f0f0f0;">G</div>
<div class="t" style="position:absolute;left:518px;width:64px;top:187.09px;font-size:12px;line-height:12px;color:#f0f0f0;text-align:center;-webkit-text-stroke:0.2px #f0f0f0;">H</div>
<div class="t" style="position:absolute;left:582px;width:64px;top:187.09px;font-size:12px;line-height:12px;color:#f0f0f0;text-align:center;-webkit-text-stroke:0.2px #f0f0f0;">I</div>
<div class="t" style="position:absolute;left:646px;width:64px;top:187.09px;font-size:12px;line-height:12px;color:#f0f0f0;text-align:center;-webkit-text-stroke:0.2px #f0f0f0;">J</div>
<div style="position:absolute;left:25px;top:202px;width:677px;height:260px;background:#ffffff;"></div>
<div style="position:absolute;left:89px;top:202px;width:1px;height:259px;background:#ebebeb;"></div>
<div style="position:absolute;left:153px;top:202px;width:1px;height:259px;background:#ebebeb;"></div>
<div style="position:absolute;left:217px;top:202px;width:1px;height:259px;background:#ebebeb;"></div>
<div style="position:absolute;left:325px;top:202px;width:1px;height:259px;background:#ebebeb;"></div>
<div style="position:absolute;left:389px;top:202px;width:1px;height:259px;background:#ebebeb;"></div>
<div style="position:absolute;left:454px;top:202px;width:1px;height:259px;background:#ebebeb;"></div>
<div style="position:absolute;left:518px;top:202px;width:1px;height:259px;background:#ebebeb;"></div>
<div style="position:absolute;left:582px;top:202px;width:1px;height:259px;background:#ebebeb;"></div>
<div style="position:absolute;left:646px;top:202px;width:1px;height:259px;background:#ebebeb;"></div>
<div style="position:absolute;left:25px;top:219px;width:677px;height:1px;background:#ebebeb;"></div>
<div style="position:absolute;left:25px;top:238px;width:677px;height:1px;background:#ebebeb;"></div>
<div style="position:absolute;left:25px;top:256px;width:677px;height:1px;background:#ebebeb;"></div>
<div style="position:absolute;left:25px;top:275px;width:677px;height:1px;background:#ebebeb;"></div>
<div style="position:absolute;left:25px;top:293px;width:677px;height:1px;background:#ebebeb;"></div>
<div style="position:absolute;left:25px;top:312px;width:677px;height:1px;background:#ebebeb;"></div>
<div style="position:absolute;left:25px;top:330px;width:677px;height:1px;background:#ebebeb;"></div>
<div style="position:absolute;left:25px;top:349px;width:677px;height:1px;background:#ebebeb;"></div>
<div style="position:absolute;left:25px;top:367px;width:677px;height:1px;background:#ebebeb;"></div>
<div style="position:absolute;left:25px;top:386px;width:677px;height:1px;background:#ebebeb;"></div>
<div style="position:absolute;left:25px;top:405px;width:677px;height:1px;background:#ebebeb;"></div>
<div style="position:absolute;left:25px;top:423px;width:677px;height:1px;background:#ebebeb;"></div>
<div style="position:absolute;left:25px;top:442px;width:677px;height:1px;background:#ebebeb;"></div>
<div style="position:absolute;left:25px;top:460px;width:677px;height:1px;background:#ebebeb;"></div>
<div style="position:absolute;left:0px;top:202px;width:24px;height:17px;background:#0e0e0e;"></div>
<div style="position:absolute;left:0px;top:219px;width:24px;height:1px;background:#2c2c2c;"></div>
<div class="t" style="position:absolute;left:0.7px;width:24px;top:206.09px;font-size:12px;line-height:12px;color:#f4f4f4;text-align:center;-webkit-text-stroke:0.25px #f4f4f4;">1</div>
<div style="position:absolute;left:0px;top:220px;width:24px;height:18px;background:#6d6d6d;"></div>
<div style="position:absolute;left:0px;top:238px;width:24px;height:1px;background:#8a8a8a;"></div>
<div class="t" style="position:absolute;left:0.7px;width:24px;top:224.09px;font-size:12px;line-height:12px;color:#f4f4f4;text-align:center;-webkit-text-stroke:0.25px #f4f4f4;">2</div>
<div style="position:absolute;left:0px;top:239px;width:24px;height:17px;background:#6d6d6d;"></div>
<div style="position:absolute;left:0px;top:256px;width:24px;height:1px;background:#8a8a8a;"></div>
<div class="t" style="position:absolute;left:0.7px;width:24px;top:242.09px;font-size:12px;line-height:12px;color:#f4f4f4;text-align:center;-webkit-text-stroke:0.25px #f4f4f4;">3</div>
<div style="position:absolute;left:0px;top:257px;width:24px;height:18px;background:#6d6d6d;"></div>
<div style="position:absolute;left:0px;top:275px;width:24px;height:1px;background:#8a8a8a;"></div>
<div class="t" style="position:absolute;left:0.7px;width:24px;top:261.09px;font-size:12px;line-height:12px;color:#f4f4f4;text-align:center;-webkit-text-stroke:0.25px #f4f4f4;">4</div>
<div style="position:absolute;left:0px;top:276px;width:24px;height:17px;background:#6d6d6d;"></div>
<div style="position:absolute;left:0px;top:293px;width:24px;height:1px;background:#8a8a8a;"></div>
<div class="t" style="position:absolute;left:0.7px;width:24px;top:280.09px;font-size:12px;line-height:12px;color:#f4f4f4;text-align:center;-webkit-text-stroke:0.25px #f4f4f4;">5</div>
<div style="position:absolute;left:0px;top:294px;width:24px;height:18px;background:#6d6d6d;"></div>
<div style="position:absolute;left:0px;top:312px;width:24px;height:1px;background:#8a8a8a;"></div>
<div class="t" style="position:absolute;left:0.7px;width:24px;top:298.09px;font-size:12px;line-height:12px;color:#f4f4f4;text-align:center;-webkit-text-stroke:0.25px #f4f4f4;">6</div>
<div style="position:absolute;left:0px;top:313px;width:24px;height:17px;background:#6d6d6d;"></div>
<div style="position:absolute;left:0px;top:330px;width:24px;height:1px;background:#2c2c2c;"></div>
<div class="t" style="position:absolute;left:0.7px;width:24px;top:316.09px;font-size:12px;line-height:12px;color:#f4f4f4;text-align:center;-webkit-text-stroke:0.25px #f4f4f4;">7</div>
<div style="position:absolute;left:0px;top:331px;width:24px;height:18px;background:#0e0e0e;"></div>
<div style="position:absolute;left:0px;top:349px;width:24px;height:1px;background:#2c2c2c;"></div>
<div class="t" style="position:absolute;left:0.7px;width:24px;top:335.09px;font-size:12px;line-height:12px;color:#f4f4f4;text-align:center;-webkit-text-stroke:0.25px #f4f4f4;">8</div>
<div style="position:absolute;left:0px;top:350px;width:24px;height:17px;background:#0e0e0e;"></div>
<div style="position:absolute;left:0px;top:367px;width:24px;height:1px;background:#2c2c2c;"></div>
<div class="t" style="position:absolute;left:0.7px;width:24px;top:354.09px;font-size:12px;line-height:12px;color:#f4f4f4;text-align:center;-webkit-text-stroke:0.25px #f4f4f4;">9</div>
<div style="position:absolute;left:0px;top:368px;width:24px;height:18px;background:#0e0e0e;"></div>
<div style="position:absolute;left:0px;top:386px;width:24px;height:1px;background:#2c2c2c;"></div>
<div class="t" style="position:absolute;left:0.7px;width:24px;top:372.09px;font-size:12px;line-height:12px;color:#f4f4f4;text-align:center;-webkit-text-stroke:0.25px #f4f4f4;">10</div>
<div style="position:absolute;left:0px;top:387px;width:24px;height:18px;background:#0e0e0e;"></div>
<div style="position:absolute;left:0px;top:405px;width:24px;height:1px;background:#2c2c2c;"></div>
<div class="t" style="position:absolute;left:0.7px;width:24px;top:391.09px;font-size:12px;line-height:12px;color:#f4f4f4;text-align:center;-webkit-text-stroke:0.25px #f4f4f4;">11</div>
<div style="position:absolute;left:0px;top:406px;width:24px;height:17px;background:#0e0e0e;"></div>
<div style="position:absolute;left:0px;top:423px;width:24px;height:1px;background:#2c2c2c;"></div>
<div class="t" style="position:absolute;left:0.7px;width:24px;top:410.09px;font-size:12px;line-height:12px;color:#f4f4f4;text-align:center;-webkit-text-stroke:0.25px #f4f4f4;">12</div>
<div style="position:absolute;left:0px;top:424px;width:24px;height:18px;background:#0e0e0e;"></div>
<div style="position:absolute;left:0px;top:442px;width:24px;height:1px;background:#2c2c2c;"></div>
<div class="t" style="position:absolute;left:0.7px;width:24px;top:428.09px;font-size:12px;line-height:12px;color:#f4f4f4;text-align:center;-webkit-text-stroke:0.25px #f4f4f4;">13</div>
<div style="position:absolute;left:0px;top:443px;width:24px;height:17px;background:#0e0e0e;"></div>
<div class="t" style="position:absolute;left:0.7px;width:24px;top:446.09px;font-size:12px;line-height:12px;color:#f4f4f4;text-align:center;-webkit-text-stroke:0.25px #f4f4f4;">14</div>
<div style="position:absolute;left:0px;top:461px;width:24px;height:1px;background:#2c2c2c;"></div>
<div style="position:absolute;left:24px;top:220px;width:1.3px;height:111px;background:#427d54;"></div>
<div style="position:absolute;left:89px;top:201px;width:64px;height:18.5px;background:#ef7c3e;"></div>
<div class="t" style="position:absolute;left:92.8px;top:206.09px;font-size:12px;line-height:12px;font-weight:700;color:#1c0c04;white-space:pre;-webkit-text-stroke:0.25px #1c0c04;transform:scaleX(1.0101);transform-origin:0 0;">Number</div>
<div style="position:absolute;left:89px;top:219px;width:65px;height:112px;background:#86df8c;box-sizing:border-box;border:1px solid #2f6e3c;"></div>
<div style="position:absolute;left:89px;top:238px;width:65px;height:1px;background:#2f6e3c;"></div>
<div style="position:absolute;left:89px;top:256px;width:65px;height:1px;background:#2f6e3c;"></div>
<div style="position:absolute;left:89px;top:275px;width:65px;height:1px;background:#2f6e3c;"></div>
<div style="position:absolute;left:89px;top:293px;width:65px;height:1px;background:#2f6e3c;"></div>
<div style="position:absolute;left:89px;top:312px;width:65px;height:1px;background:#2f6e3c;"></div>
<div class="t" style="position:absolute;left:89px;width:62px;top:223.84px;font-size:12.3px;line-height:12.3px;color:#0a1a0c;text-align:right;-webkit-text-stroke:0.3px #0a1a0c;">2</div>
<div class="t" style="position:absolute;left:89px;width:62px;top:242.84px;font-size:12.3px;line-height:12.3px;color:#0a1a0c;text-align:right;-webkit-text-stroke:0.3px #0a1a0c;">3</div>
<div class="t" style="position:absolute;left:89px;width:62px;top:260.84px;font-size:12.3px;line-height:12.3px;color:#0a1a0c;text-align:right;-webkit-text-stroke:0.3px #0a1a0c;">4</div>
<div class="t" style="position:absolute;left:89px;width:62px;top:279.84px;font-size:12.3px;line-height:12.3px;color:#0a1a0c;text-align:right;-webkit-text-stroke:0.3px #0a1a0c;">5</div>
<div class="t" style="position:absolute;left:89px;width:62px;top:297.84px;font-size:12.3px;line-height:12.3px;color:#0a1a0c;text-align:right;-webkit-text-stroke:0.3px #0a1a0c;">6</div>
<div class="t" style="position:absolute;left:89px;width:62px;top:316.84px;font-size:12.3px;line-height:12.3px;color:#0a1a0c;text-align:right;-webkit-text-stroke:0.3px #0a1a0c;">7</div>
<div style="position:absolute;left:211px;top:216px;width:119px;height:122px;box-sizing:border-box;border:3px solid #bf282f;background:#fff;"></div>
<div style="position:absolute;left:217px;top:219px;width:109px;height:112px;background:#6bb876;"></div>
<div style="position:absolute;left:218px;top:220px;width:107px;height:18px;background:#86df8c;"></div>
<div style="position:absolute;left:217px;top:219px;width:109px;height:112px;box-sizing:border-box;border:1px solid #1d5f30;"></div>
<div style="position:absolute;left:324px;top:329.5px;width:3.2px;height:3px;background:#1d5f30;"></div>
<div class="t" style="position:absolute;left:221px;top:223.92px;font-size:12.2px;line-height:12.2px;font-weight:400;color:#041006;white-space:pre;-webkit-text-stroke:0.25px #041006;transform:scaleX(1.0063);transform-origin:0 0;">cell value is even</div>
<div class="t" style="position:absolute;left:221px;top:242.92px;font-size:12.2px;line-height:12.2px;font-weight:400;color:#041006;white-space:pre;-webkit-text-stroke:0.25px #041006;transform:scaleX(1.0090);transform-origin:0 0;">cell value is odd</div>
<div class="t" style="position:absolute;left:221px;top:260.92px;font-size:12.2px;line-height:12.2px;font-weight:400;color:#041006;white-space:pre;-webkit-text-stroke:0.25px #041006;transform:scaleX(1.0063);transform-origin:0 0;">cell value is even</div>
<div class="t" style="position:absolute;left:221px;top:279.92px;font-size:12.2px;line-height:12.2px;font-weight:400;color:#041006;white-space:pre;-webkit-text-stroke:0.25px #041006;transform:scaleX(1.0090);transform-origin:0 0;">cell value is odd</div>
<div class="t" style="position:absolute;left:221px;top:297.92px;font-size:12.2px;line-height:12.2px;font-weight:400;color:#041006;white-space:pre;-webkit-text-stroke:0.25px #041006;transform:scaleX(1.0063);transform-origin:0 0;">cell value is even</div>
<div class="t" style="position:absolute;left:221px;top:316.92px;font-size:12.2px;line-height:12.2px;font-weight:400;color:#041006;white-space:pre;-webkit-text-stroke:0.25px #041006;transform:scaleX(1.0090);transform-origin:0 0;">cell value is odd</div>
<div style="position:absolute;left:702px;top:183px;width:18px;height:303px;background:#151515;"></div>
<div style="position:absolute;left:717px;top:183px;width:1px;height:303px;background:#2a2a2a;"></div>
<svg style="position:absolute;left:706px;top:187px;" width="8" height="5" viewBox="0 0 8 5"><path d="M0.5 4.8 L4 0.5 L7.5 4.8 Z" fill="#a8a8a8"/></svg>
<div style="position:absolute;left:706.5px;top:196px;width:7px;height:178.5px;background:#a6a6a6;border-radius:3.5px;"></div>
<svg style="position:absolute;left:706px;top:455px;" width="8" height="6" viewBox="0 0 8 6"><path d="M0.5 0.5 L4 5.5 L7.5 0.5 Z" fill="#a8a8a8"/></svg>
<div style="position:absolute;left:0px;top:462px;width:702px;height:1.5px;background:#0a0a0a;"></div>
<div style="position:absolute;left:0px;top:463.5px;width:702px;height:22.5px;background:#1c1f1a;"></div>
<svg style="position:absolute;left:16px;top:469px;" width="8" height="10" viewBox="0 0 8 10"><path d="M6 1 L2 5 L6 9" fill="none" stroke="#9a9a9a" stroke-width="1"/></svg>
<svg style="position:absolute;left:40.5px;top:469px;" width="8" height="10" viewBox="0 0 8 10"><path d="M2 1 L6 5 L2 9" fill="none" stroke="#9a9a9a" stroke-width="1"/></svg>
<div class="t" style="position:absolute;left:89.3px;top:471.79px;font-size:10px;line-height:10px;font-weight:400;color:#f0f0f0;white-space:pre;-webkit-text-stroke:0.25px #f0f0f0;transform:scaleX(0.9684);transform-origin:0 0;">Sheet1</div>
<div style="position:absolute;left:129px;top:467.3px;width:1px;height:14px;background:#454545;"></div>
<svg style="position:absolute;left:128px;top:462px" width="55" height="23" viewBox="0 0 55 23"><path d="M0 0 Q5 0 5 4 V18 Q5 22 9 22 H46 Q50 22 50 18 V4 Q50 0 55 0 Z" fill="#ffffff"/></svg>
<div class="t" style="position:absolute;left:138.9px;top:468.62px;font-size:10.2px;line-height:10.2px;font-weight:400;color:#1a1a1a;white-space:pre;-webkit-text-stroke:0.25px #1a1a1a;">Sheet3</div>
<div style="position:absolute;left:139px;top:480px;width:32.5px;height:1.5px;background:#2a6e4a;border-radius:1px;"></div>
<div style="position:absolute;left:180.5px;top:467.3px;width:1px;height:14px;background:#454545;"></div>
<div class="t" style="position:absolute;left:190.7px;top:471.79px;font-size:10px;line-height:10px;font-weight:400;color:#f0f0f0;white-space:pre;-webkit-text-stroke:0.25px #f0f0f0;transform:scaleX(0.9810);transform-origin:0 0;">Sheet2</div>
<div style="position:absolute;left:232.5px;top:467.3px;width:1px;height:14px;background:#454545;"></div>
<svg style="position:absolute;left:262.5px;top:469.5px;" width="10.5" height="10" viewBox="0 0 10.5 10"><path d="M5.25 0.5 V9.5 M0.8 5 H9.7" stroke="#dcdcdc" stroke-width="1.1"/></svg>
<div style="position:absolute;left:432.1px;top:470.6px;width:1.6px;height:1.6px;background:#e0e0e0;border-radius:0.5px;"></div>
<div style="position:absolute;left:432.1px;top:473.9px;width:1.6px;height:1.6px;background:#e0e0e0;border-radius:0.5px;"></div>
<div style="position:absolute;left:432.1px;top:477.1px;width:1.6px;height:1.6px;background:#e0e0e0;border-radius:0.5px;"></div>
<div style="position:absolute;left:446px;top:468px;width:256px;height:12px;background:#161815;border-radius:6px;"></div>
<svg style="position:absolute;left:448.5px;top:470.5px;" width="6" height="7" viewBox="0 0 6 7"><path d="M5.5 0.5 V6.5 L0.5 3.5 Z" fill="#a8a8a8"/></svg>
<div style="position:absolute;left:457.9px;top:470.6px;width:206.2px;height:6.4px;background:#a6a6a6;border-radius:3.2px;"></div>
<svg style="position:absolute;left:694px;top:470.5px;" width="6" height="7" viewBox="0 0 6 7"><path d="M0.5 0.5 V6.5 L5.5 3.5 Z" fill="#a8a8a8"/></svg>
<div style="position:absolute;left:0px;top:486px;width:720px;height:1px;background:#30302e;"></div>
<div style="position:absolute;left:0px;top:487px;width:720px;height:15px;background:#161616;"></div>
<div class="t" style="position:absolute;left:8.7px;top:490.97px;font-size:8.6px;line-height:8.6px;font-weight:400;color:#e6e6e6;white-space:pre;-webkit-text-stroke:0.25px #e6e6e6;transform:scaleX(0.8574);transform-origin:0 0;">Ready</div>
<svg style="position:absolute;left:43px;top:489.5px;" width="13" height="12" viewBox="0 0 13 12"><rect x="1" y="1" width="10.5" height="9.5" rx="1.6" fill="none" stroke="#e6e6e6" stroke-width="1.1"/><path d="M1.2 3.2 H11.3" stroke="#e6e6e6" stroke-width="1.1"/><circle cx="6.6" cy="7.3" r="2.5" fill="#161616" stroke="#e6e6e6" stroke-width="1.1"/><circle cx="6.6" cy="7.3" r="0.9" fill="#e6e6e6"/><path d="M2.6 6.5 V8" stroke="#e6e6e6" stroke-width="1"/></svg>
<svg style="position:absolute;left:67px;top:489.5px;" width="13" height="12" viewBox="0 0 13 12"><ellipse cx="5" cy="2" rx="1.9" ry="1.3" fill="none" stroke="#e6e6e6" stroke-width="1"/><path d="M0.8 4.6 Q5 3.2 9.2 4.6" fill="none" stroke="#e6e6e6" stroke-width="1"/><path d="M5 4.3 V7 L3.4 10.6 M4.6 7.4 L2.6 7.6" fill="none" stroke="#e6e6e6" stroke-width="1"/><path d="M7 6.8 L11.4 11 M11.4 6.8 L7 11" stroke="#e6e6e6" stroke-width="1"/></svg>
<div class="t" style="position:absolute;left:81.1px;top:490.97px;font-size:8.6px;line-height:8.6px;font-weight:700;color:#f4f4f4;white-space:pre;-webkit-text-stroke:0.25px #f4f4f4;transform:scaleX(0.9084);transform-origin:0 0;">Accessibility: Investigate</div>
<div class="t" style="position:absolute;left:697px;top:491.05px;font-size:8.5px;line-height:8.5px;font-weight:400;color:#f0f0f0;white-space:pre;-webkit-text-stroke:0.25px #f0f0f0;transform:scaleX(1.1460);transform-origin:0 0;-webkit-text-stroke:0.1px #f0f0f0;">Count</div>
</div></body></html>
